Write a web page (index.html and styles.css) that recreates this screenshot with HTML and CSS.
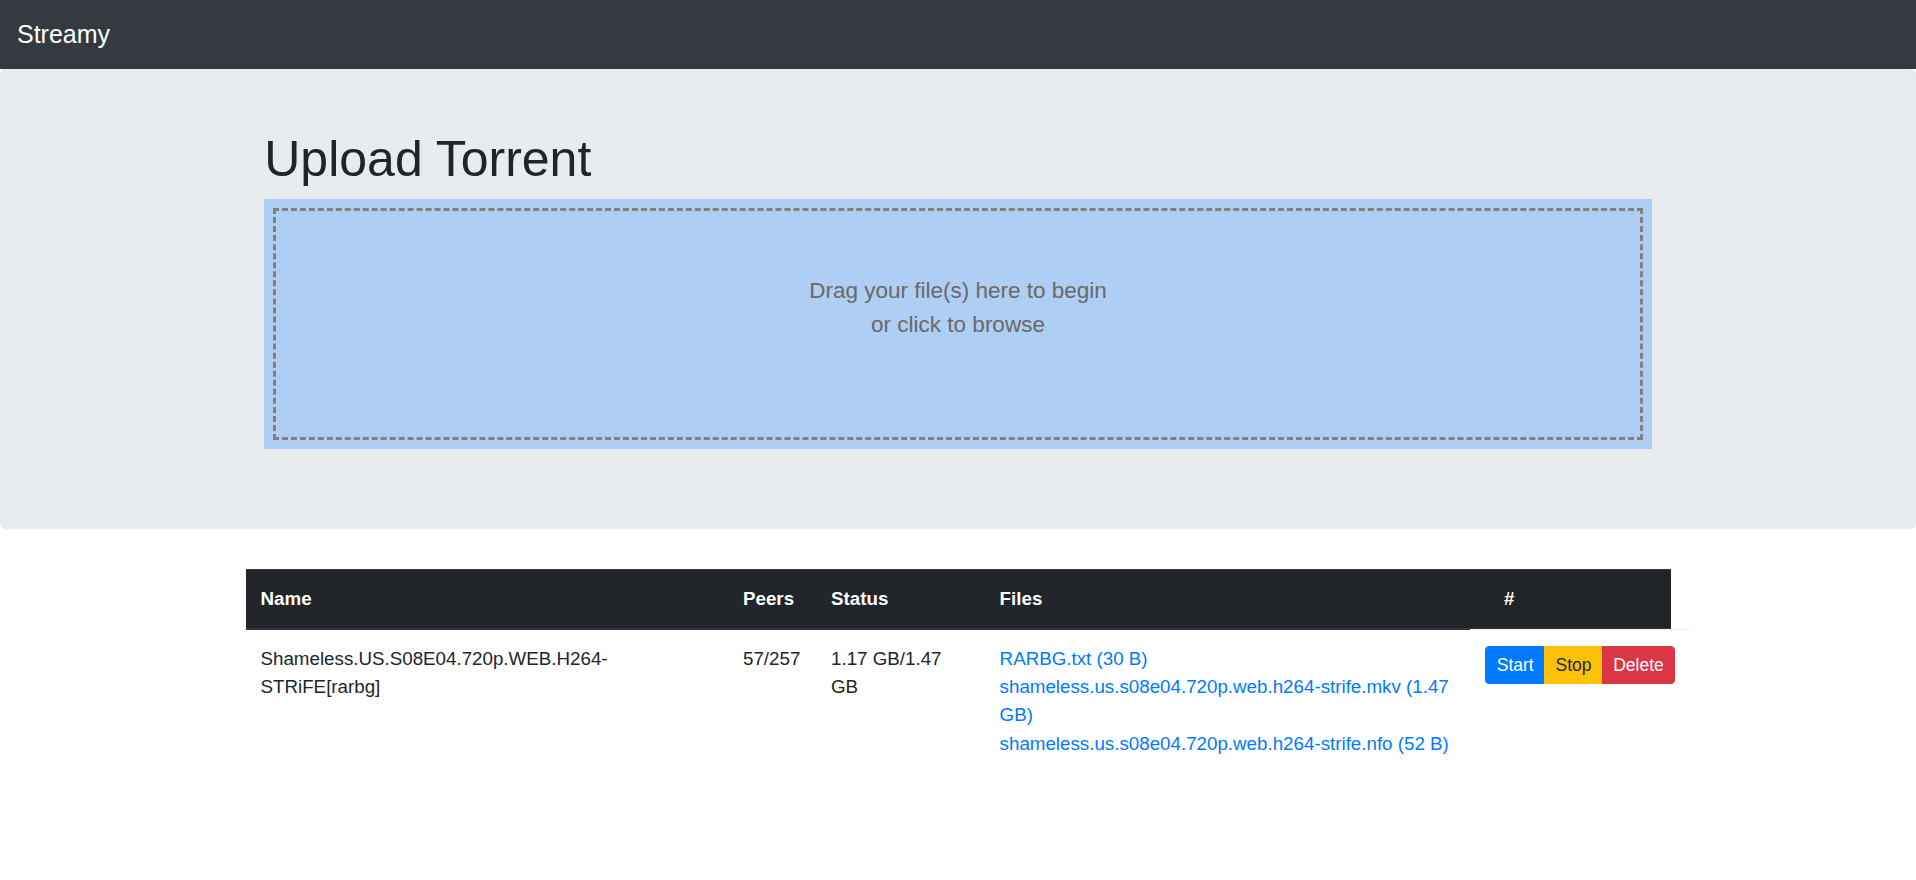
FILE: index.html
```
<!DOCTYPE html>
<html lang="en">
<head>
<meta charset="utf-8">
<title>Streamy</title>
<link rel="stylesheet" href="styles.css">
</head>
<body>
<nav class="navbar">
  <a class="brand" href="#">Streamy</a>
</nav>
<section class="jumbotron">
  <div class="container">
    <h1 class="title">Upload Torrent</h1>
    <div class="dropbox">
      <p class="drop-text">Drag your file(s) here to begin<br>or click to browse</p>
    </div>
  </div>
</section>
<div class="container table-wrap">
  <table class="torrents">
    <colgroup>
      <col class="c-name">
      <col class="c-peers">
      <col class="c-status">
      <col class="c-files">
      <col class="c-actions">
    </colgroup>
    <thead>
      <tr>
        <th>Name</th>
        <th>Peers</th>
        <th>Status</th>
        <th>Files</th>
        <th>#</th>
      </tr>
    </thead>
    <tbody>
      <tr>
        <td>Shameless.US.S08E04.720p.WEB.H264-STRiFE[rarbg]</td>
        <td>57/257</td>
        <td>1.17 GB/1.47 GB</td>
        <td>
          <div class="file"><a href="#">RARBG.txt (30 B)</a></div>
          <div class="file"><a href="#">shameless.us.s08e04.720p.web.h264-strife.mkv (1.47 GB)</a></div>
          <div class="file"><a href="#">shameless.us.s08e04.720p.web.h264-strife.nfo (52 B)</a></div>
        </td>
        <td class="actions-cell">
          <div class="btn-group">
            <button class="btn btn-start">Start</button>
            <button class="btn btn-stop">Stop</button>
            <button class="btn btn-delete">Delete</button>
          </div>
        </td>
      </tr>
    </tbody>
  </table>
</div>
</body>
</html>
```

FILE: styles.css
```
* { box-sizing: border-box; }

html, body {
  margin: 0;
  padding: 0;
  background: #fff;
}

body {
  font-family: "Liberation Sans", Arial, sans-serif;
  font-size: 18.75px;
  line-height: 1.5;
  color: #212529;
}

.navbar {
  background: #343a40;
  padding: 9.5px 17px;
  display: flex;
  align-items: center;
}

.brand {
  color: #fff;
  text-decoration: none;
  font-size: 25px;
  line-height: 37.5px;
  padding: 6.25px 0;
}

.jumbotron {
  background: #e9ecef;
  padding: 60px 0 80px;
  margin-bottom: 40px;
  border-radius: 6px;
}

.container {
  width: 1425px;
  margin: 0 auto;
  padding: 0 18.75px;
}

.title {
  margin: 0 0 10px;
  font-size: 50px;
  line-height: 60px;
  font-weight: 400;
  color: #212529;
}

.dropbox {
  background: #aecef4;
  outline: 3px dashed #808080;
  outline-offset: -12.5px;
  color: #696969;
  padding: 12.5px;
  min-height: 250px;
}

.drop-text {
  margin: 0;
  padding: 62.5px 0;
  font-size: 22.5px;
  line-height: 33.75px;
  text-align: center;
}

.table-wrap {
  padding: 0;
}

.torrents {
  width: 100%;
  table-layout: fixed;
  border-collapse: collapse;
}

.c-name { width: 482.5px; }
.c-peers { width: 88px; }
.c-status { width: 168.6px; }
.c-files { width: 504.4px; }
.c-actions { width: 181.5px; }

.torrents th,
.torrents td {
  padding: 15px;
  text-align: left;
  vertical-align: top;
  line-height: 28.125px;
}

.torrents th {
  background: #212529;
  color: #fff;
  font-weight: 700;
  border-top: 1.25px solid #32383e;
  border-bottom: 2.5px solid #32383e;
}

.torrents td {
  border-top: 1.25px solid #dee2e6;
}

.file a {
  color: #007bff;
  text-decoration: none;
}

.actions-cell {
  position: relative;
}

.actions-cell::before {
  content: "";
  position: absolute;
  top: -1px;
  left: -19px;
  right: -19px;
  height: 1.25px;
  background: #eceef0;
}

.btn-group {
  display: inline-flex;
  margin-left: -18.75px;
  margin-top: 1px;
  white-space: nowrap;
}

.btn {
  font-family: "Liberation Sans", Arial, sans-serif;
  font-size: 17.5px;
  line-height: 26.25px;
  padding: 5px 10.5px;
  border: 1.25px solid transparent;
  border-radius: 0;
  color: #fff;
  cursor: pointer;
}

.btn + .btn { margin-left: -1.25px; }

.btn-start {
  background: #007bff;
  border-color: #007bff;
  border-radius: 4px 0 0 4px;
}

.btn-stop {
  background: #ffc107;
  border-color: #ffc107;
  color: #212529;
}

.btn-delete {
  background: #dc3545;
  border-color: #dc3545;
  border-radius: 0 4px 4px 0;
}
```
